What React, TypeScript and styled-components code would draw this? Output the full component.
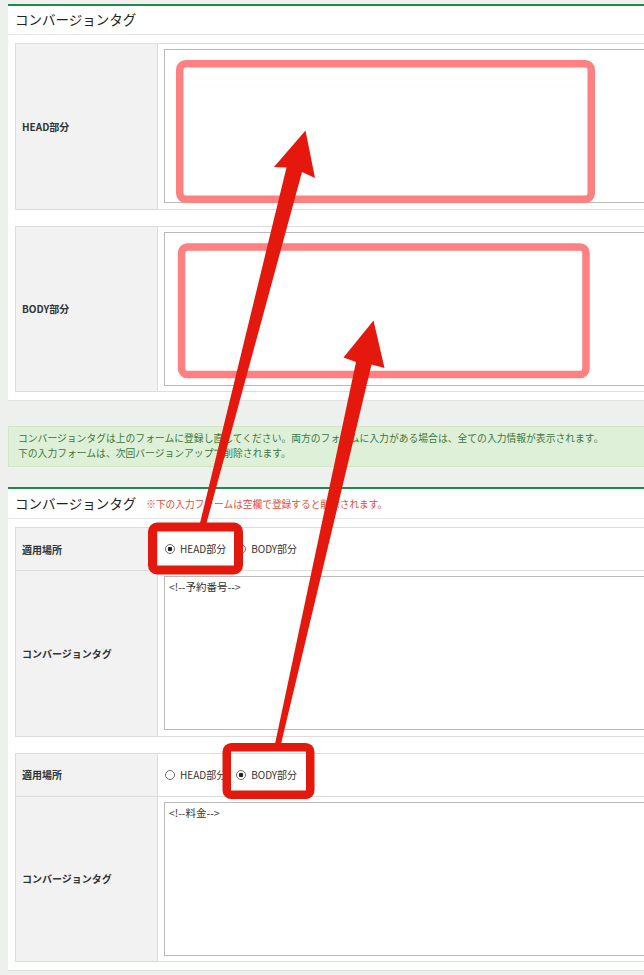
import React from "react";
import styled, { createGlobalStyle } from "styled-components";

const GlobalStyle = createGlobalStyle`
  html, body {
    margin: 0;
    padding: 0;
    background: #eef0ed;
    overflow: hidden;
  }
  body {
    font-family: "Noto Sans CJK JP", "Noto Sans", sans-serif;
    color: #333;
  }
`;

const Page = styled.div`
  position: relative;
  width: 1100px;
  padding: 4px 0 40px 8px;
  display: flex;
  flex-direction: column;
`;

const Panel = styled.section`
  background: #fff;
  border-top: 2px solid #1f8a4c;
  border-bottom: 1px solid #e1e3e1;
`;

const PanelHeader = styled.header<{ $h: number }>`
  height: ${(p) => p.$h}px;
  display: flex;
  align-items: center;
  gap: 10px;
  padding: 0 7px;
  border-bottom: 1px solid #e6e6e6;
`;

const Title = styled.h2`
  margin: 0;
  font-size: 13.5px;
  font-weight: 400;
  color: #222;
  line-height: 1;
`;

const Note = styled.span`
  font-size: 9.7px;
  color: #e74c3c;
  line-height: 1;
  padding-top: 2px;
`;

const PanelBody = styled.div`
  padding: 8px 7px;
  display: flex;
  flex-direction: column;
  gap: 16px;
`;

const FormTable = styled.table`
  border-collapse: collapse;
  width: 100%;
`;

const Th = styled.th`
  width: 129px;
  background: #f2f2f2;
  border: 1px solid #dcdcdc;
  padding: 0 6px;
  text-align: left;
  font-size: 10px;
  font-weight: 700;
  color: #333;
`;

const Td = styled.td<{ $radio?: boolean }>`
  border: 1px solid #dcdcdc;
  padding: ${(p) => (p.$radio ? "0 6px" : "5px 6px 5.5px")};
  height: ${(p) => (p.$radio ? "42px" : "auto")};
  vertical-align: middle;
`;

const TagArea = styled.textarea`
  display: block;
  width: 100%;
  height: 154px;
  box-sizing: border-box;
  margin: 0;
  border: 1px solid #b9b9b9;
  padding: 3px 4px;
  font-family: "Noto Sans CJK JP", "Noto Sans", sans-serif;
  font-size: 10.5px;
  line-height: 13px;
  color: #333;
  resize: none;
  background: #fff;
  outline: none;
`;

const RadioGroup = styled.div`
  display: flex;
  align-items: center;
  gap: 10px;
  padding-left: 1px;
`;

const RadioLabel = styled.label`
  display: flex;
  align-items: center;
  gap: 5px;
  font-size: 10px;
  color: #333;
  line-height: 1;
`;

const Radio = styled.input`
  appearance: none;
  margin: 0;
  width: 10px;
  height: 10px;
  border: 1px solid #6d6d6d;
  border-radius: 50%;
  box-sizing: border-box;
  background: #fff;
  &:checked {
    background: radial-gradient(circle, #222 0 2px, #fff 2.6px);
  }
`;

const Notice = styled.div`
  margin: 25px 0 20px;
  background: #dff0d8;
  border: 1px solid #d0e6c4;
  color: #3c763d;
  font-size: 9.8px;
  line-height: 15px;
  padding: 4px 9px 5px;
`;

const Overlay = styled.svg`
  position: absolute;
  top: 0;
  left: 0;
  width: 644px;
  height: 975px;
  pointer-events: none;
`;

const RED = "#e5180e";
const PINK = "#ff8080";

function TagTable({ label }: { label: string }) {
  return (
    <FormTable>
      <tbody>
        <tr>
          <Th>{label}</Th>
          <Td>
            <TagArea defaultValue="" />
          </Td>
        </tr>
      </tbody>
    </FormTable>
  );
}

function LegacyTable({ name, place, value }: { name: string; place: "head" | "body"; value: string }) {
  return (
    <FormTable>
      <tbody>
        <tr>
          <Th>適用場所</Th>
          <Td $radio>
            <RadioGroup>
              <RadioLabel>
                <Radio type="radio" name={name} defaultChecked={place === "head"} />
                HEAD部分
              </RadioLabel>
              <RadioLabel>
                <Radio type="radio" name={name} defaultChecked={place === "body"} />
                BODY部分
              </RadioLabel>
            </RadioGroup>
          </Td>
        </tr>
        <tr>
          <Th>コンバージョンタグ</Th>
          <Td>
            <TagArea defaultValue={value} />
          </Td>
        </tr>
      </tbody>
    </FormTable>
  );
}

export default function App() {
  return (
    <>
      <GlobalStyle />
      <Page>
        <Panel>
          <PanelHeader $h={28}>
            <Title>コンバージョンタグ</Title>
          </PanelHeader>
          <PanelBody>
            <TagTable label="HEAD部分" />
            <TagTable label="BODY部分" />
          </PanelBody>
        </Panel>

        <Notice>
          コンバージョンタグは上のフォームに登録し直してください。両方のフォームに入力がある場合は、全ての入力情報が表示されます。
          <br />
          下の入力フォームは、次回バージョンアップで削除されます。
        </Notice>

        <Panel>
          <PanelHeader $h={29}>
            <Title>コンバージョンタグ</Title>
            <Note>※下の入力フォームは空欄で登録すると削除されます。</Note>
          </PanelHeader>
          <PanelBody>
            <LegacyTable name="place1" place="head" value="<!--予約番号-->" />
            <LegacyTable name="place2" place="body" value="<!--料金-->" />
          </PanelBody>
        </Panel>

        <Overlay viewBox="0 0 644 975">
          <rect x="179.75" y="63.75" width="411.5" height="135.5" rx="6" fill="none" stroke={PINK} strokeWidth="7.5" />
          <rect x="181.5" y="247" width="404.5" height="127.5" rx="6" fill="none" stroke={PINK} strokeWidth="7.5" />
          <polygon
            fill={RED}
            points="200,523 286.5,167.5 274,167 305.5,130.5 315,178 302,172 206.5,523"
          />
          <polygon
            fill={RED}
            points="275,744 356,362 343.5,357.5 373.5,320.5 384.5,368 371.5,364.5 281,744"
          />
          <rect x="152.5" y="527" width="86" height="43" rx="4.5" fill="none" stroke={RED} strokeWidth="9" />
          <rect x="226.75" y="747.25" width="83.5" height="47.5" rx="4.5" fill="none" stroke={RED} strokeWidth="8.5" />
        </Overlay>
      </Page>
    </>
  );
}
